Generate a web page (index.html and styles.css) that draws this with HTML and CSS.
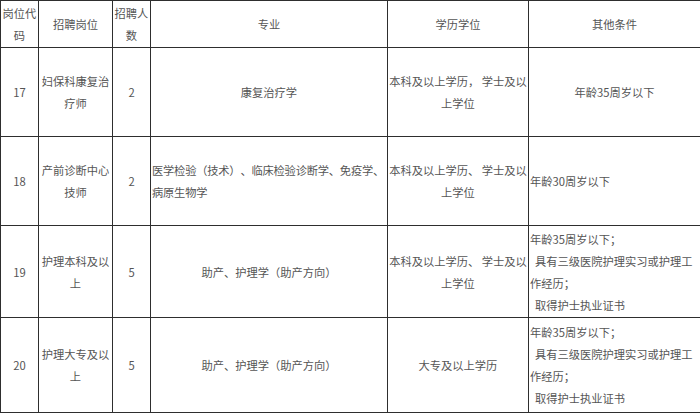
FILE: index.html
```html
<!DOCTYPE html>
<html lang="zh">
<head>
<meta charset="utf-8">
<title>招聘岗位</title>
<link rel="stylesheet" href="styles.css">
</head>
<body>
<table class="jobs">
  <colgroup>
    <col class="c-code">
    <col class="c-post">
    <col class="c-num">
    <col class="c-major">
    <col class="c-edu">
    <col class="c-other">
  </colgroup>
  <tbody>
    <tr class="r-head">
      <td class="nw">岗位代<br>码</td>
      <td>招聘岗位</td>
      <td class="nw">招聘人<br>数</td>
      <td class="soft-l">专业</td>
      <td>学历学位</td>
      <td class="soft-l">其他条件</td>
    </tr>
    <tr class="r-17">
      <td>17</td>
      <td class="nw">妇保科康复治<br>疗师</td>
      <td>2</td>
      <td class="soft-l">康复治疗学</td>
      <td class="nw">本科及以上学历， 学士及以<br>上学位</td>
      <td class="soft-l">年龄35周岁以下</td>
    </tr>
    <tr class="r-18">
      <td>18</td>
      <td class="nw">产前诊断中心<br>技师</td>
      <td>2</td>
      <td class="soft-l left nw tight">医学检验（技术）、临床检验诊断学、免疫学、<br>病原生物学</td>
      <td class="nw">本科及以上学历、 学士及以<br>上学位</td>
      <td class="soft-l left">年龄30周岁以下</td>
    </tr>
    <tr class="r-19">
      <td>19</td>
      <td class="nw">护理本科及以<br>上</td>
      <td>5</td>
      <td class="soft-l">助产、护理学（助产方向）</td>
      <td class="nw">本科及以上学历、 学士及以<br>上学位</td>
      <td class="soft-l left nw">年龄35周岁以下；<br>&nbsp;&nbsp;具有三级医院护理实习或护理工<br>作经历；<br>&nbsp;&nbsp;取得护士执业证书</td>
    </tr>
    <tr class="r-20">
      <td>20</td>
      <td class="nw">护理大专及以<br>上</td>
      <td>5</td>
      <td class="soft-l">助产、护理学（助产方向）</td>
      <td>大专及以上学历</td>
      <td class="soft-l left nw">年龄35周岁以下；<br>&nbsp;&nbsp;具有三级医院护理实习或护理工<br>作经历；<br>&nbsp;&nbsp;取得护士执业证书</td>
    </tr>
  </tbody>
</table>
</body>
</html>
```

FILE: styles.css
```css
html, body {
  margin: 0;
  padding: 0;
  background: #ffffff;
}

.jobs {
  width: 700px;
  table-layout: fixed;
  border-collapse: collapse;
  font-family: "Noto Sans CJK SC", "Noto Sans", sans-serif;
  font-size: 11.25px;
  line-height: 22px;
  color: #555555;
  text-spacing-trim: space-all;
}

.c-code { width: 38px; }
.c-post { width: 74px; }
.c-num { width: 38px; }
.c-major { width: 237px; }
.c-edu { width: 141px; }
.c-other { width: 172px; }

.jobs td {
  border: 1px solid #2e2e2e;
  padding: 0 1px;
  text-align: center;
  vertical-align: middle;
  overflow: hidden;
}

.jobs td.soft-l {
  border-left-color: #8a8a8a;
}

.jobs td.left {
  text-align: left;
}

.jobs td.nw {
  white-space: nowrap;
}

.jobs td.tight {
  letter-spacing: -0.2px;
}

.r-head { height: 47px; }
.r-17 { height: 89px; }
.r-18 { height: 89px; }
.r-19 { height: 92px; }
.r-20 { height: 95px; }
```
